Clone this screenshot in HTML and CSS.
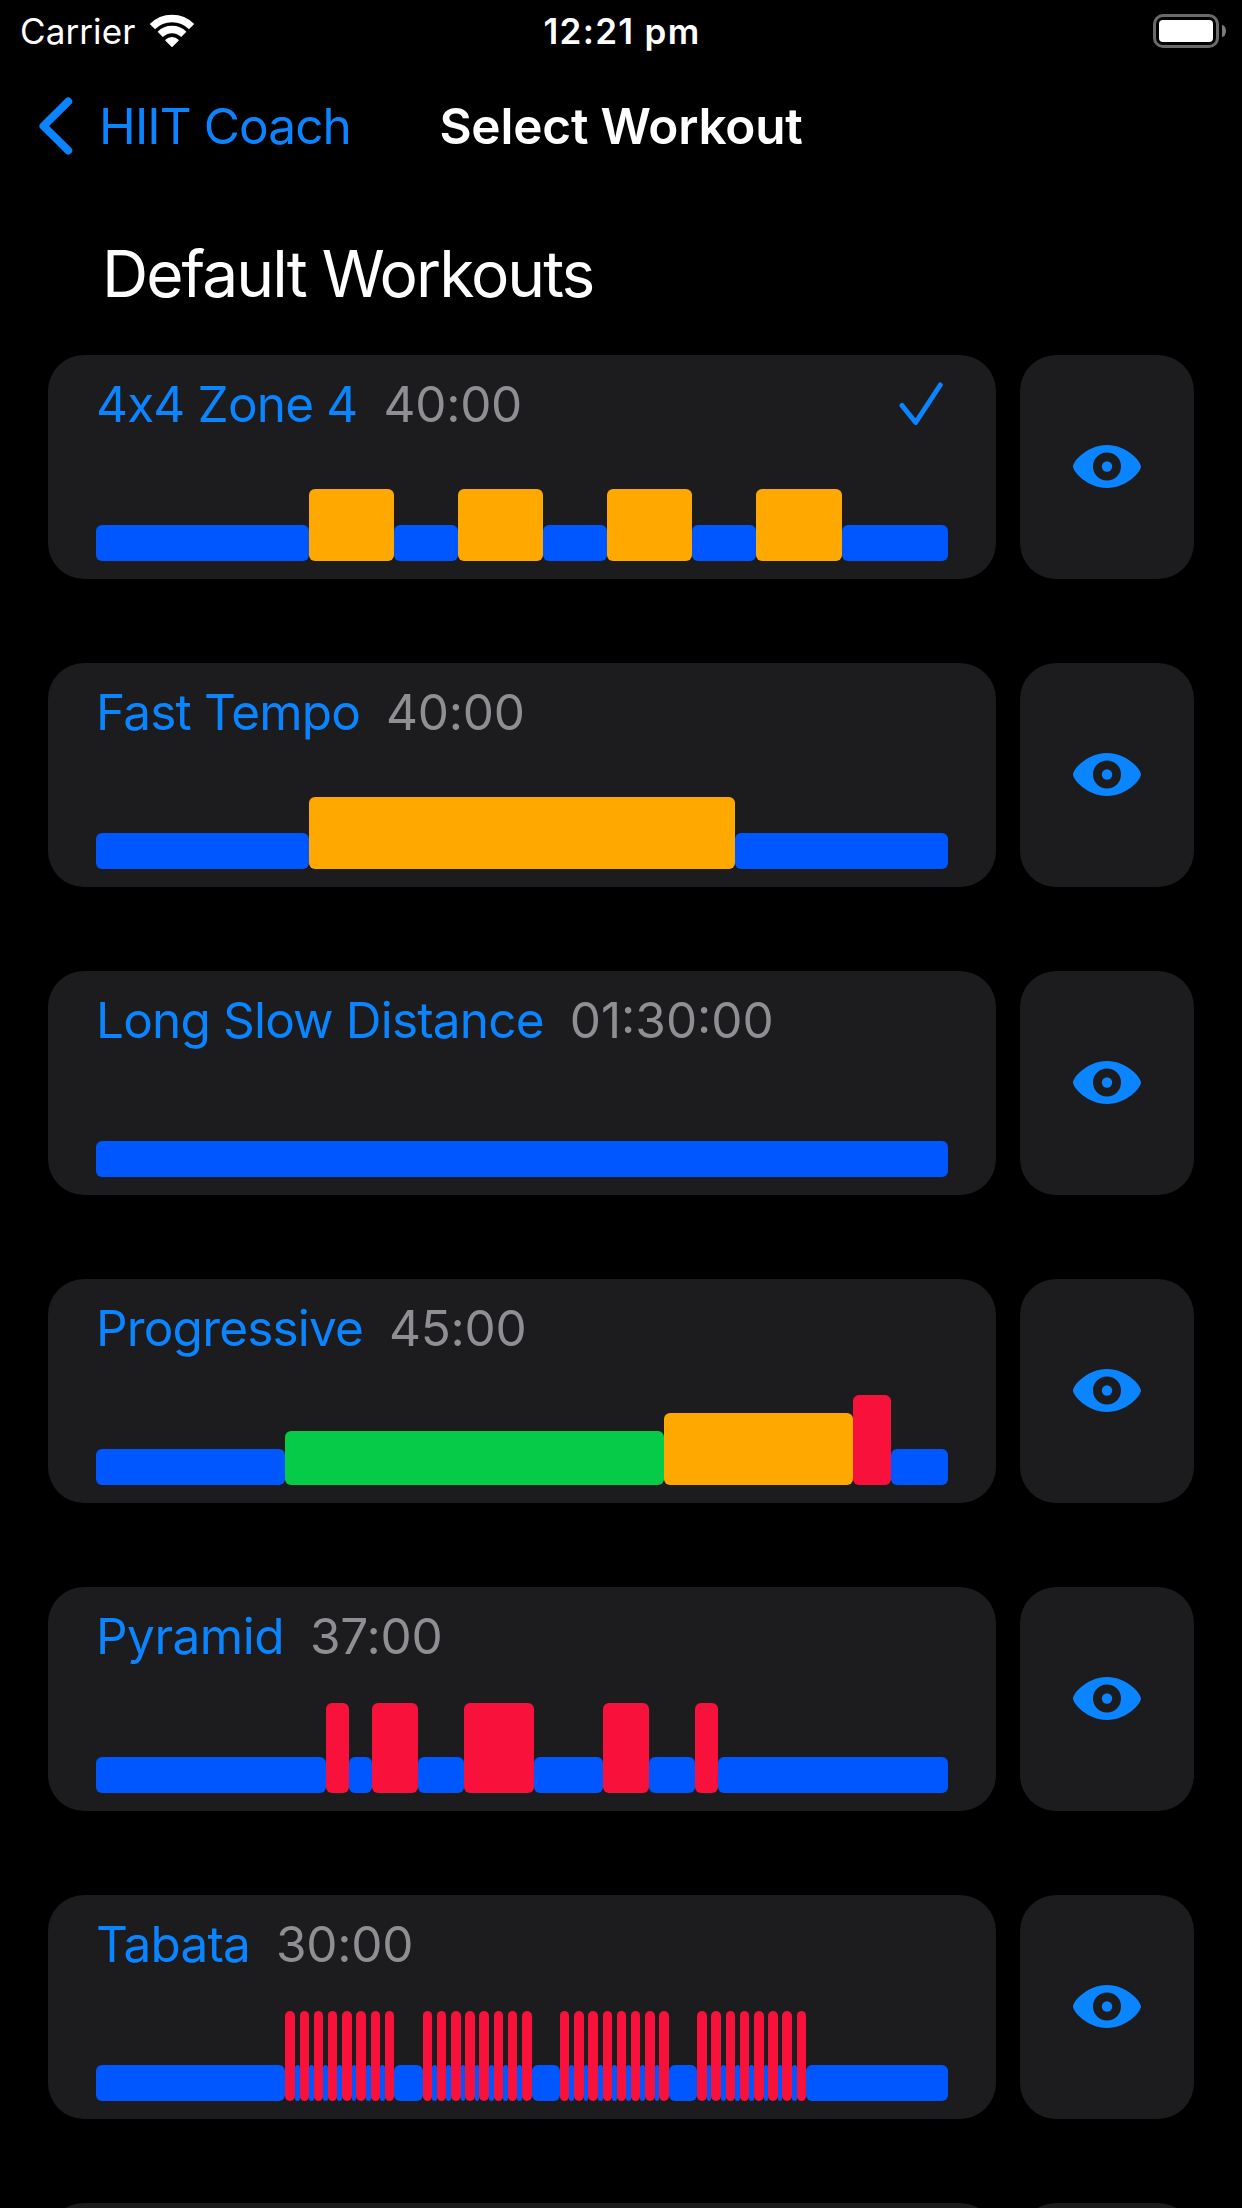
FILE: index.html
```html
<!DOCTYPE html>
<html lang="en">
<head>
    <meta charset="UTF-8">
    <meta name="viewport" content="width=device-width, initial-scale=1.0">
    <title>Select Workout</title>
    <link rel="stylesheet" href="styles.css">
</head>
<body>
    <!-- Shared icons -->
    <svg class="sprite">
        <symbol id="eye" viewBox="0 0 68 43">
            <path fill-rule="evenodd" d="M34 0C54 0 68 16.500 68 21.500C68 26.500 54 43 34 43C14 43 0 26.500 0 21.500C0 16.500 14 0 34 0ZM34 7.500a14 14 0 1 0 0 28a14 14 0 1 0 0-28Z"/>
            <circle cx="34" cy="21.500" r="5.200"/>
        </symbol>
    </svg>

    <div class="screen">
        <div class="status-bar">
            <div class="status-left">
                <span class="carrier">Carrier</span>
                <svg class="wifi" viewBox="0 0 46 34">
                    <path class="wifi-arc" d="M3.400 12.600A27.700 27.700 0 0 1 42.600 12.600"/>
                    <path class="wifi-arc" d="M11.200 20.400A16.700 16.700 0 0 1 34.800 20.400"/>
                    <path class="wifi-dot" d="M17 26.200A8.600 8.600 0 0 1 29 26.200L23 32.300Z"/>
                </svg>
            </div>
            <div class="clock">12:21 pm</div>
            <div class="status-right">
                <div class="battery"></div>
                <div class="battery-tip"></div>
            </div>
        </div>

        <div class="nav-bar">
            <a class="back" href="#">
                <svg class="chevron" viewBox="0 0 34 58"><path d="M29.200 4.500L4.500 29L29.200 53.500"/></svg>
                <span class="back-label">HIIT Coach</span>
            </a>
            <h1 class="nav-title">Select Workout</h1>
            <div class="nav-spacer"></div>
        </div>

        <h2 class="section-title">Default Workouts</h2>

        <div class="workout-list">
            <div class="workout">
                <div class="card">
                    <div class="card-header">
                        <span class="name name-4x4">4x4 Zone 4</span>
                        <span class="time">40:00</span>
                        <svg class="check" viewBox="0 0 44 44"><path d="M3 23.500L16.700 40.500L41.300 3"/></svg>
                    </div>
                    <div class="chart">
                        <i class="z2" style="flex-grow: 10"></i>
                        <i class="z4" style="flex-grow: 4"></i>
                        <i class="z2" style="flex-grow: 3"></i>
                        <i class="z4" style="flex-grow: 4"></i>
                        <i class="z2" style="flex-grow: 3"></i>
                        <i class="z4" style="flex-grow: 4"></i>
                        <i class="z2" style="flex-grow: 3"></i>
                        <i class="z4" style="flex-grow: 4"></i>
                        <i class="z2" style="flex-grow: 5"></i>
                    </div>
                </div>
                <a class="preview" href="#"><svg class="eye"><use href="#eye"/></svg></a>
            </div>

            <div class="workout">
                <div class="card">
                    <div class="card-header">
                        <span class="name">Fast Tempo</span>
                        <span class="time">40:00</span>
                    </div>
                    <div class="chart">
                        <i class="z2" style="flex-grow: 10"></i>
                        <i class="z4" style="flex-grow: 20"></i>
                        <i class="z2" style="flex-grow: 10"></i>
                    </div>
                </div>
                <a class="preview" href="#"><svg class="eye"><use href="#eye"/></svg></a>
            </div>

            <div class="workout">
                <div class="card">
                    <div class="card-header">
                        <span class="name">Long Slow Distance</span>
                        <span class="time time-long">01:30:00</span>
                    </div>
                    <div class="chart">
                        <i class="z2" style="flex-grow: 90"></i>
                    </div>
                </div>
                <a class="preview" href="#"><svg class="eye"><use href="#eye"/></svg></a>
            </div>

            <div class="workout">
                <div class="card">
                    <div class="card-header">
                        <span class="name">Progressive</span>
                        <span class="time">45:00</span>
                    </div>
                    <div class="chart">
                        <i class="z2" style="flex-grow: 10"></i>
                        <i class="z3" style="flex-grow: 20"></i>
                        <i class="z4" style="flex-grow: 10"></i>
                        <i class="z5" style="flex-grow: 2"></i>
                        <i class="z2" style="flex-grow: 3"></i>
                    </div>
                </div>
                <a class="preview" href="#"><svg class="eye"><use href="#eye"/></svg></a>
            </div>

            <div class="workout">
                <div class="card">
                    <div class="card-header">
                        <span class="name name-pyramid">Pyramid</span>
                        <span class="time">37:00</span>
                    </div>
                    <div class="chart">
                        <i class="z2" style="flex-grow: 10"></i>
                        <i class="z5" style="flex-grow: 1"></i>
                        <i class="z2" style="flex-grow: 1"></i>
                        <i class="z5" style="flex-grow: 2"></i>
                        <i class="z2" style="flex-grow: 2"></i>
                        <i class="z5" style="flex-grow: 3"></i>
                        <i class="z2" style="flex-grow: 3"></i>
                        <i class="z5" style="flex-grow: 2"></i>
                        <i class="z2" style="flex-grow: 2"></i>
                        <i class="z5" style="flex-grow: 1"></i>
                        <i class="z2" style="flex-grow: 10"></i>
                    </div>
                </div>
                <a class="preview" href="#"><svg class="eye"><use href="#eye"/></svg></a>
            </div>

            <div class="workout">
                <div class="card">
                    <div class="card-header">
                        <span class="name">Tabata</span>
                        <span class="time">30:00</span>
                    </div>
                    <!-- 4 rounds of 8 x 20s on / 10s off, 60s between rounds -->
                    <div class="chart">
                        <i class="z2" style="flex-grow: 400"></i>
                        <i class="z5 on"></i><i class="z2 off"></i><i class="z5 on"></i><i class="z2 off"></i>
                        <i class="z5 on"></i><i class="z2 off"></i><i class="z5 on"></i><i class="z2 off"></i>
                        <i class="z5 on"></i><i class="z2 off"></i><i class="z5 on"></i><i class="z2 off"></i>
                        <i class="z5 on"></i><i class="z2 off"></i><i class="z5 on"></i>
                        <i class="z2" style="flex-grow: 60"></i>
                        <i class="z5 on"></i><i class="z2 off"></i><i class="z5 on"></i><i class="z2 off"></i>
                        <i class="z5 on"></i><i class="z2 off"></i><i class="z5 on"></i><i class="z2 off"></i>
                        <i class="z5 on"></i><i class="z2 off"></i><i class="z5 on"></i><i class="z2 off"></i>
                        <i class="z5 on"></i><i class="z2 off"></i><i class="z5 on"></i>
                        <i class="z2" style="flex-grow: 60"></i>
                        <i class="z5 on"></i><i class="z2 off"></i><i class="z5 on"></i><i class="z2 off"></i>
                        <i class="z5 on"></i><i class="z2 off"></i><i class="z5 on"></i><i class="z2 off"></i>
                        <i class="z5 on"></i><i class="z2 off"></i><i class="z5 on"></i><i class="z2 off"></i>
                        <i class="z5 on"></i><i class="z2 off"></i><i class="z5 on"></i>
                        <i class="z2" style="flex-grow: 60"></i>
                        <i class="z5 on"></i><i class="z2 off"></i><i class="z5 on"></i><i class="z2 off"></i>
                        <i class="z5 on"></i><i class="z2 off"></i><i class="z5 on"></i><i class="z2 off"></i>
                        <i class="z5 on"></i><i class="z2 off"></i><i class="z5 on"></i><i class="z2 off"></i>
                        <i class="z5 on"></i><i class="z2 off"></i><i class="z5 on"></i>
                        <i class="z2" style="flex-grow: 300"></i>
                    </div>
                </div>
                <a class="preview" href="#"><svg class="eye"><use href="#eye"/></svg></a>
            </div>

            <div class="workout workout-cut">
                <div class="card"></div>
                <div class="preview"></div>
            </div>
        </div>
    </div>
</body>
</html>
```
FILE: styles.css
```css
:root {
    --bg: #000;
    --card: #1c1c1e;
    --tint: #0a84ff;
    --muted: #8e8e93;

    /* Heart rate zones */
    --zone2: #0056ff;
    --zone3: #06cb49;
    --zone4: #ffa900;
    --zone5: #f8113a;
}

* {
    box-sizing: border-box;
}

body {
    margin: 0;
    background: var(--bg);
    color: #fff;
    font-family: Inter, "Liberation Sans", sans-serif;
    font-size: 49.5px;
}

a {
    color: var(--tint);
    text-decoration: none;
}

.sprite {
    display: none;
}

.screen {
    height: 2208px;
    overflow: hidden;
}

/* Status bar */
.status-bar {
    display: grid;
    grid-template-columns: 1fr auto 1fr;
    align-items: center;
    height: 60px;
    padding: 0 16px 0 20px;
    font-size: 35px;
    line-height: 62px;
}

.status-left,
.status-right {
    display: flex;
    align-items: center;
}

.carrier {
    width: 129px;
    white-space: nowrap;
    letter-spacing: 0.1px;
}

.wifi {
    width: 46px;
    height: 34px;
}

.wifi-arc {
    fill: none;
    stroke: #fff;
    stroke-width: 7.4;
}

.wifi-dot {
    fill: #fff;
    stroke: #fff;
    stroke-width: 1.5;
    stroke-linejoin: round;
}

.clock {
    margin-right: 2px;
    font-weight: 600;
    letter-spacing: 1.3px;
}

.status-right {
    justify-content: flex-end;
    gap: 3px;
}

.battery {
    width: 66px;
    height: 34px;
    padding: 3px;
    border: 3px solid #6a6a6a;
    border-radius: 10px;
}

.battery::before {
    content: "";
    display: block;
    height: 22px;
    border-radius: 4px;
    background: #fff;
}

.battery-tip {
    width: 4px;
    height: 12px;
    border-radius: 0 4px 4px 0 / 0 6px 6px 0;
    background: #7c7c7c;
}

/* Navigation bar */
.nav-bar {
    display: grid;
    grid-template-columns: 1fr auto 1fr;
    align-items: center;
    height: 132px;
    padding: 0 39px;
}

.back {
    display: flex;
    align-items: center;
    gap: 26px;
}

.chevron {
    width: 34px;
    height: 58px;
    fill: none;
    stroke: var(--tint);
    stroke-width: 8;
    stroke-linecap: round;
    stroke-linejoin: round;
}

.back-label {
    white-space: nowrap;
    letter-spacing: -0.9px;
}

.nav-title {
    margin: 0;
    font-size: 49.5px;
    font-weight: 600;
    letter-spacing: -0.2px;
}

.section-title {
    margin: 0;
    padding: 42px 102px 41px;
    font-size: 64px;
    font-weight: 400;
    line-height: 80px;
    letter-spacing: -1.95px;
}

/* Workouts */
.workout-list {
    display: flex;
    flex-direction: column;
    gap: 84px;
    padding: 0 48px;
}

.workout {
    display: grid;
    grid-template-columns: 948px 174px;
    gap: 24px;
    height: 224px;
}

.card,
.preview {
    border-radius: 36px;
    background: var(--card);
}

.card {
    display: flex;
    flex-direction: column;
    justify-content: space-between;
    padding: 18px 48px;
}

/* Only the top edge of the last row is on screen */
.workout-cut {
    height: 5px;
    overflow: hidden;
}

.workout-cut .card,
.workout-cut .preview {
    height: 224px;
}

.card-header {
    display: flex;
    align-items: center;
    height: 62px;
    gap: 26px;
    white-space: nowrap;
}

.name {
    color: var(--tint);
    letter-spacing: -0.83px;
}

/* Keep the "x" a letter between the digits */
.name-4x4 {
    font-feature-settings: "calt" 0;
}

.name-pyramid {
    letter-spacing: -0.5px;
}

.time {
    color: var(--muted);
    letter-spacing: -0.25px;
}

.time-long {
    letter-spacing: 0;
}

.check {
    width: 44px;
    height: 44px;
    margin-left: auto;
    margin-right: 5px;
    fill: none;
    stroke: var(--tint);
    stroke-width: 5;
    stroke-linecap: round;
    stroke-linejoin: round;
}

.chart {
    display: flex;
    align-items: flex-end;
    height: 90px;
}

.chart i {
    flex: 1 1 0;
    border-radius: 6px;
}

.chart .on { flex-grow: 20; }
.chart .off { flex-grow: 10; }

.z2 { height: 36px; background: var(--zone2); }
.z3 { height: 54px; background: var(--zone3); }
.z4 { height: 72px; background: var(--zone4); }
.z5 { height: 90px; background: var(--zone5); }

.preview {
    display: flex;
    align-items: center;
    justify-content: center;
}

.eye {
    width: 68px;
    height: 43px;
    margin-bottom: 1px;
    fill: var(--tint);
}
```
